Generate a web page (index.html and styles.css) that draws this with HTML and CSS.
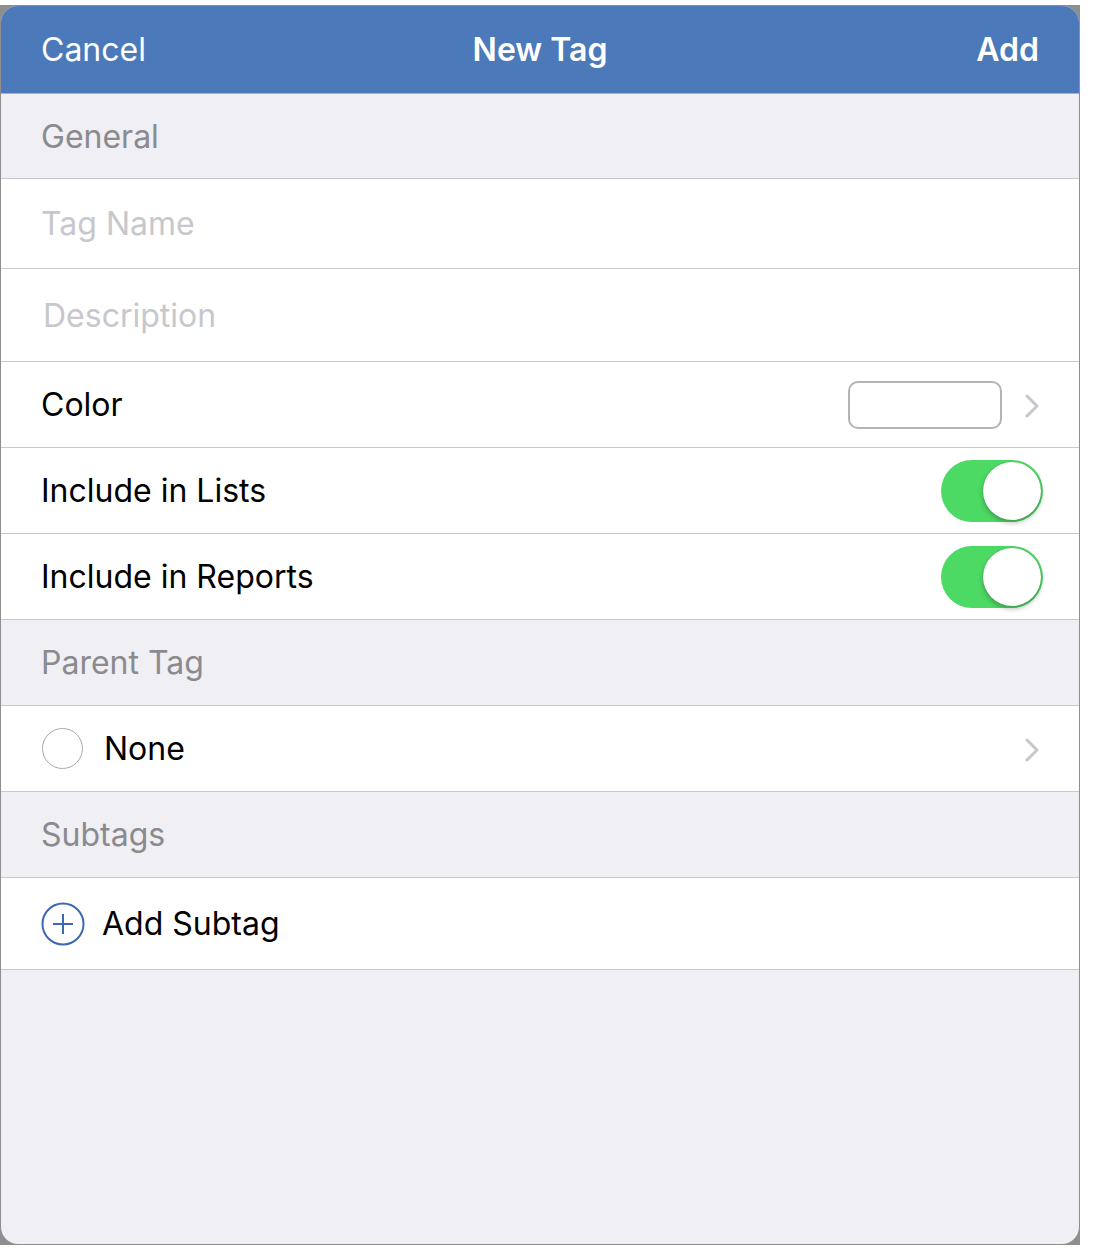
FILE: index.html
```html
<!DOCTYPE html>
<html lang="en">
<head>
    <meta charset="UTF-8">
    <title>New Tag</title>
    <link rel="stylesheet" href="styles.css">
</head>
<body>

<div class="frame">
    <div class="sheet">
        <!-- Navigation bar -->
        <header class="nav-bar">
            <span class="nav-btn">Cancel</span>
            <span class="nav-title">New Tag</span>
            <span class="nav-btn nav-add">Add</span>
        </header>

        <div class="section-header">General</div>
        <div class="group">
            <div class="row row-input"><span class="placeholder">Tag Name</span></div>
            <div class="row row-input row-desc"><span class="placeholder">Description</span></div>
            <div class="row">
                <span class="label">Color</span>
                <span class="swatch"></span>
                <svg class="chevron" width="16" height="26" viewBox="0 0 16 26"><path d="M3 3 L13 13 L3 23" fill="none" stroke="#c7c7cc" stroke-width="3" stroke-linecap="round" stroke-linejoin="round"/></svg>
            </div>
            <div class="row">
                <span class="label">Include in Lists</span>
                <span class="toggle on"><span class="knob"></span></span>
            </div>
            <div class="row">
                <span class="label">Include in Reports</span>
                <span class="toggle on"><span class="knob"></span></span>
            </div>
        </div>

        <div class="section-header">Parent Tag</div>
        <div class="group">
            <div class="row">
                <span class="radio"></span>
                <span class="label">None</span>
                <svg class="chevron" width="16" height="26" viewBox="0 0 16 26"><path d="M3 3 L13 13 L3 23" fill="none" stroke="#c7c7cc" stroke-width="3" stroke-linecap="round" stroke-linejoin="round"/></svg>
            </div>
        </div>

        <div class="section-header">Subtags</div>
        <div class="group">
            <div class="row row-add">
                <svg class="plus" width="44" height="44" viewBox="0 0 44 44">
                    <circle cx="22" cy="22" r="20.5" fill="none" stroke="#3b68b3" stroke-width="2"/>
                    <path d="M22 12 V32 M12 22 H32" stroke="#3b68b3" stroke-width="2"/>
                </svg>
                <span class="label">Add Subtag</span>
            </div>
        </div>
    </div>
</div>

</body>
</html>
```

FILE: styles.css
```css
body {
    margin: 0;
    background-color: #ffffff;
    font-family: Inter, "Liberation Sans", Arial, sans-serif;
}

/* Outer frame with grey edge behind rounded corners */
.frame {
    width: 1080px;
    height: 1240px;
    margin-top: 5px;
    background-color: #8e8e8e;
    box-sizing: border-box;
    padding: 1px;
}

.sheet {
    height: 100%;
    background-color: #efeff4;
    border-radius: 17px;
    overflow: hidden;
}

/* Navigation bar */
.nav-bar {
    height: 87px;
    background-color: #4b79b9;
    display: grid;
    grid-template-columns: 1fr auto 1fr;
    align-items: center;
    padding: 0 40px;
    color: white;
    font-size: 32px;
    border-bottom: 1px solid #b2b2b2;
}

.nav-title {
    font-weight: 600;
}

.nav-add {
    font-weight: 600;
    text-align: right;
}

/* Section headers */
.section-header {
    height: 84px;
    display: flex;
    align-items: center;
    padding-left: 40px;
    font-size: 32px;
    color: #8a8a8f;
    border-bottom: 1px solid #c8c7cc;
}

.group {
    background-color: #ffffff;
}

.group + .section-header {
    height: 85px;
}

.row {
    height: 85px;
    display: flex;
    align-items: center;
    padding: 0 36px 0 40px;
    border-bottom: 1px solid #c8c7cc;
    font-size: 32px;
    color: #000000;
}

.row-input {
    height: 89px;
}

.row-desc {
    height: 92px;
}

.row-add {
    height: 91px;
}

.placeholder {
    color: #c7c7cd;
}

.row-desc .placeholder {
    padding-left: 2px;
}

.label {
    flex: 1;
}

/* Color swatch */
.swatch {
    width: 150px;
    height: 44px;
    border: 2px solid #b4b4b4;
    border-radius: 10px;
    margin-right: 22px;
}

.chevron {
    margin-top: 2px;
    margin-right: 3px;
}

/* Switches */
.toggle {
    position: relative;
    width: 102px;
    height: 62px;
    border-radius: 31px;
    background-color: #4cd964;
}

.toggle .knob {
    position: absolute;
    right: 2px;
    top: 2px;
    width: 58px;
    height: 58px;
    border-radius: 50%;
    background-color: #ffffff;
    box-shadow: 0 3px 5px rgba(0, 0, 0, 0.25), 0 0 1px rgba(0, 0, 0, 0.3);
}

/* Radio circle */
.radio {
    width: 39px;
    height: 39px;
    border: 1px solid #a8a8a8;
    border-radius: 50%;
    margin: 0 21px 0 1px;
}

.plus {
    margin-right: 17px;
}
```
